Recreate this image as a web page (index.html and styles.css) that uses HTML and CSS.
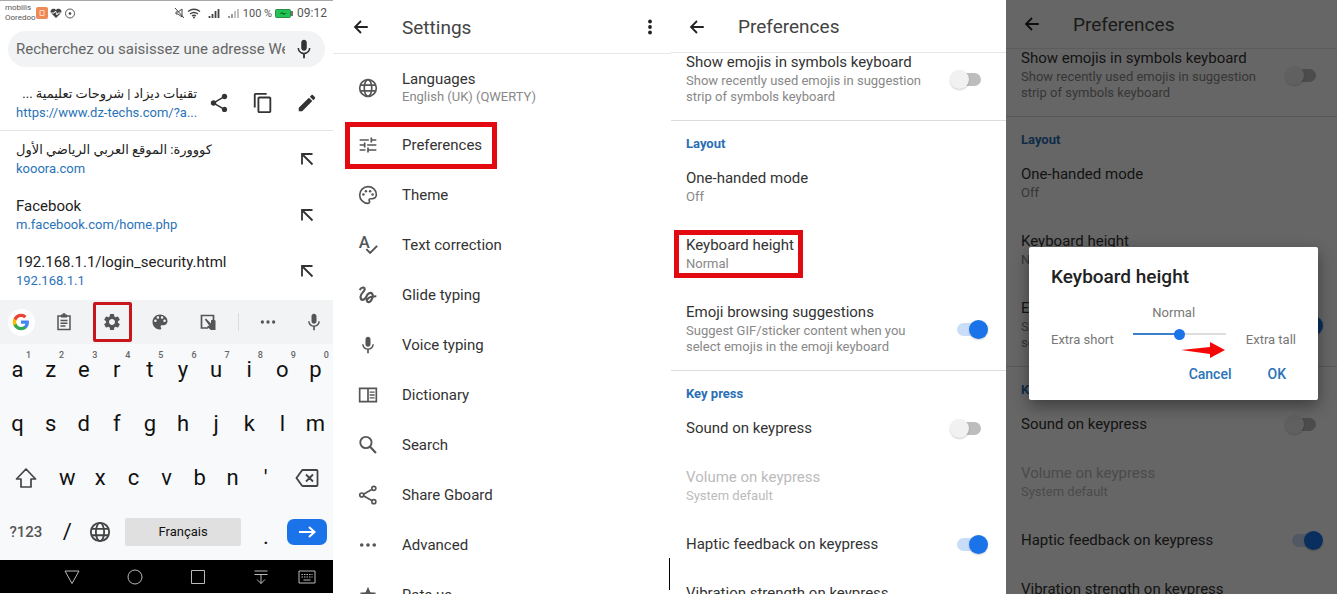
FILE: index.html
```
<!DOCTYPE html>
<html lang="en">
<head>
    <meta charset="UTF-8">
    <meta name="viewport" content="width=device-width, initial-scale=1.0">
    <title>Gboard - Keyboard height</title>
    <link rel="stylesheet" href="styles.css">
</head>
<body>
    <!-- Shared icons -->
    <svg class="sprite" aria-hidden="true">
        <symbol id="back" viewBox="0 0 24 24"><path d="M21 12H4M12 4l-8 8 8 8" fill="none" stroke="currentColor" stroke-width="2.4"/></symbol>
        <symbol id="mic" viewBox="0 0 24 24"><path d="M12 14c1.66 0 3-1.34 3-3V5c0-1.66-1.34-3-3-3S9 3.34 9 5v6c0 1.66 1.34 3 3 3zm5.3-3c0 3-2.54 5.1-5.3 5.1S6.7 14 6.7 11H5c0 3.41 2.72 6.23 6 6.72V22h2v-4.28c3.28-.48 6-3.3 6-6.72h-1.7z"/></symbol>
        <symbol id="insert" viewBox="0 0 14 14"><path d="M2 12.500V2h10.500M2 2l10.500 10.500" fill="none" stroke="currentColor" stroke-width="1.800"/></symbol>
        <symbol id="globe" viewBox="0 0 24 24"><g fill="none" stroke="currentColor" stroke-width="2"><circle cx="12" cy="12" r="10"/><ellipse cx="12" cy="12" rx="4.500" ry="10"/><path d="M3 8.500h18M3 15.500h18"/></g></symbol>
        <symbol id="dots" viewBox="0 0 24 24"><circle cx="4.500" cy="12" r="2.200"/><circle cx="12" cy="12" r="2.200"/><circle cx="19.500" cy="12" r="2.200"/></symbol>
    </svg>

    <main class="screens">

        <!-- Browser with the keyboard open -->
        <section class="screen browser" lang="fr">
            <div class="status">
                <div class="carriers"><span>mobilis</span><span>Ooredoo</span></div>
                <svg class="status-left" viewBox="0 0 40 12" aria-hidden="true">
                    <rect x="0" y="0" width="12" height="12" rx="2" fill="#ee8a56"/>
                    <path d="M4 3.500h4v5h-4z" fill="none" stroke="#fbd9c4"/>
                    <path d="M20 11l-5-5c-2-3 3-6 5-3 2-3 7 0 5 3z" fill="#444"/>
                    <path d="M15 6h3l1.500-2 1.500 4 1-2h3" fill="none" stroke="#fff" stroke-width=".9"/>
                    <circle cx="34" cy="6.500" r="4.500" fill="none" stroke="#555"/><circle cx="34" cy="6.500" r="1.300" fill="#444"/>
                </svg>
                <svg class="status-right" viewBox="0 0 66 12" aria-hidden="true">
                    <path d="M2 5h2l4-3v8L4 7H2zM1 1l9 10" fill="none" stroke="#444"/>
                    <path d="M14 4.500q6-4.500 12 0M16 7q4-3 8 0M18 9q2-1.500 4 0" fill="none" stroke="#444" stroke-width="1.300"/>
                    <circle cx="20" cy="10.500" r="1" fill="#444"/>
                    <path d="M35.500 11V9M38.500 11V7M41.500 11V4M44.500 11V2" stroke="#444" stroke-width="1.800"/>
                    <path d="M55 11V9M58 11V7" stroke="#555" stroke-width="1.200"/><path d="M61 11V4M64 11V2" stroke="#bbb" stroke-width="1.800"/>
                </svg>
                <span class="percent">100 %</span>
                <svg class="battery" viewBox="0 0 18 9" aria-hidden="true">
                    <rect x=".5" y=".5" width="15" height="8" rx="1" fill="#21c352" stroke="#2b8d48"/><path d="M17 2v5" stroke="#444" stroke-width="1.500"/><path d="M4 4.500l4-1.500v1l4 .5-4 1.500v-1z" fill="#126b2d"/>
                </svg>
                <span>09:12</span>
            </div>

            <div class="search">
                <input type="text" aria-label="Recherche" placeholder="Recherchez ou saisissez une adresse Web">
                <button type="button" aria-label="Recherche vocale"><svg class="icon-22"><use href="#mic"/></svg></button>
            </div>

            <ul class="results">
                <li class="current">
                    <a href="#">
                        <span class="title" lang="ar" dir="rtl">تقنيات ديزاد | شروحات تعليمية ...</span>
                        <span class="url">https://www.dz-techs.com/?a...</span>
                    </a>
                    <div class="tools">
                        <button type="button" aria-label="Partager"><svg class="icon-22" viewBox="0 0 24 24"><path d="M18 16.080c-.76 0-1.440.3-1.960.77L8.910 12.700c.05-.23.09-.46.09-.7s-.04-.47-.09-.7l7.050-4.110c.54.5 1.250.81 2.040.81 1.660 0 3-1.340 3-3s-1.340-3-3-3-3 1.340-3 3c0 .24.040.47.090.7L8.040 9.810C7.500 9.310 6.790 9 6 9c-1.660 0-3 1.340-3 3s1.340 3 3 3c.79 0 1.500-.31 2.040-.81l7.120 4.160c-.05.21-.08.43-.08.65 0 1.610 1.310 2.920 2.920 2.920s2.920-1.310 2.920-2.920-1.310-2.920-2.920-2.920z"/></svg></button>
                        <button type="button" aria-label="Copier"><svg class="icon-22" viewBox="0 0 24 24"><path d="M16 1H4c-1.100 0-2 .9-2 2v14h2V3h12V1zm3 4H8c-1.100 0-2 .9-2 2v14c0 1.100.9 2 2 2h11c1.100 0 2-.9 2-2V7c0-1.100-.9-2-2-2zm0 16H8V7h11v14z"/></svg></button>
                        <button type="button" aria-label="Modifier"><svg class="icon-22" viewBox="0 0 24 24"><path d="M3 17.250V21h3.750L17.810 9.940l-3.750-3.750L3 17.250zM20.710 7.040c.39-.39.39-1.020 0-1.410l-2.340-2.340c-.39-.39-1.020-.39-1.410 0l-1.830 1.830 3.750 3.750 1.830-1.830z"/></svg></button>
                    </div>
                </li>
                <li>
                    <a href="#">
                        <span class="title" lang="ar">كووورة: الموقع العربي الرياضي الأول</span>
                        <span class="url">kooora.com</span>
                    </a>
                    <button type="button" aria-label="Insérer"><svg class="icon-14"><use href="#insert"/></svg></button>
                </li>
                <li>
                    <a href="#">
                        <span class="title">Facebook</span>
                        <span class="url">m.facebook.com/home.php</span>
                    </a>
                    <button type="button" aria-label="Insérer"><svg class="icon-14"><use href="#insert"/></svg></button>
                </li>
                <li>
                    <a href="#">
                        <span class="title">192.168.1.1/login_security.html</span>
                        <span class="url">192.168.1.1</span>
                    </a>
                    <button type="button" aria-label="Insérer"><svg class="icon-14"><use href="#insert"/></svg></button>
                </li>
            </ul>

            <div class="toolbar">
                <button type="button" class="google" aria-label="Google"><svg class="icon-18" viewBox="0 0 24 24">
                    <path fill="#4285f4" d="M22.560 12.250c0-.78-.07-1.530-.2-2.250H12v4.260h5.920c-.26 1.370-1.040 2.530-2.210 3.310v2.770h3.570c2.080-1.920 3.280-4.740 3.280-8.090z"/>
                    <path fill="#34a853" d="M12 23c2.970 0 5.460-.98 7.280-2.660l-3.570-2.770c-.98.66-2.230 1.060-3.710 1.060-2.860 0-5.290-1.930-6.160-4.530H2.180v2.840C3.990 20.530 7.700 23 12 23z"/>
                    <path fill="#fbbc05" d="M5.840 14.090c-.22-.66-.35-1.360-.35-2.090s.13-1.430.35-2.090V7.070H2.180C1.430 8.550 1 10.220 1 12s.43 3.450 1.180 4.930l2.850-2.220.81-.62z"/>
                    <path fill="#ea4335" d="M12 5.380c1.620 0 3.060.56 4.210 1.640l3.150-3.150C17.450 2.090 14.970 1 12 1 7.700 1 3.990 3.470 2.180 7.070l3.660 2.840c.87-2.600 3.300-4.530 6.160-4.530z"/>
                </svg></button>
                <button type="button" aria-label="Presse-papiers"><svg class="icon-18" viewBox="0 0 18 18"><path d="M3 3h12v13.500H3zM5.500 7.500h7M5.500 10.200h7M5.500 13h5" fill="none" stroke="currentColor" stroke-width="1.500"/><path d="M6 1.500h1.500a1.500 1.500 0 0 1 3 0H12v3H6z"/></svg></button>
                <button type="button" class="marked" aria-label="Paramètres"><svg class="icon-20" viewBox="0 0 24 24"><path d="M19.140 12.940c.04-.3.060-.61.060-.94 0-.32-.02-.64-.07-.94l2.030-1.580c.18-.14.230-.41.120-.61l-1.920-3.320c-.12-.22-.37-.29-.59-.22l-2.390.96c-.5-.38-1.030-.7-1.620-.94l-.36-2.540c-.04-.24-.24-.41-.48-.41h-3.840c-.24 0-.43.170-.47.410l-.36 2.540c-.59.240-1.130.570-1.620.940l-2.390-.96c-.22-.08-.47 0-.59.220L2.740 8.870c-.12.210-.08.470.120.610l2.030 1.580c-.05.300-.09.630-.09.940s.020.640.070.940l-2.030 1.580c-.18.140-.23.410-.12.610l1.920 3.320c.12.220.370.290.590.220l2.390-.96c.5.380 1.030.700 1.620.940l.36 2.540c.05.240.240.410.480.410h3.840c.24 0 .44-.17.470-.41l.36-2.540c.59-.24 1.130-.56 1.620-.94l2.390.96c.22.080.470 0 .590-.22l1.920-3.320c.12-.22.070-.47-.12-.61l-2.010-1.580zM12 15.600c-1.980 0-3.600-1.620-3.600-3.600s1.620-3.600 3.600-3.600 3.600 1.620 3.600 3.600-1.620 3.600-3.600 3.600z"/></svg></button>
                <button type="button" aria-label="Thème"><svg class="icon-20" viewBox="0 0 24 24"><path d="M12 3c-4.970 0-9 4.030-9 9s4.030 9 9 9c.83 0 1.500-.67 1.500-1.500 0-.39-.15-.74-.39-1.010-.23-.26-.38-.61-.38-.99 0-.83.670-1.500 1.500-1.500H16c2.760 0 5-2.240 5-5 0-4.420-4.030-8-9-8zm-5.500 9c-.83 0-1.500-.67-1.500-1.500S5.670 9 6.500 9 8 9.670 8 10.500 7.330 12 6.500 12zm3-4C8.670 8 8 7.330 8 6.500S8.670 5 9.500 5s1.500.67 1.500 1.500S10.330 8 9.500 8zm5 0c-.83 0-1.500-.67-1.500-1.500S13.670 5 14.500 5s1.500.67 1.500 1.500S15.330 8 14.500 8zm3 4c-.83 0-1.500-.67-1.500-1.500S16.670 9 17.500 9s1.500.67 1.500 1.500-.67 1.500-1.500 1.500z"/></svg></button>
                <button type="button" aria-label="Une main"><svg class="icon-18" viewBox="0 0 18 18"><path d="M9 15H2.500V2.500h12V8" fill="none" stroke="currentColor" stroke-width="1.700"/><path d="M5.800 6.500L7 5.500l5 5V7.200q2-.8 4.500.3V17h-4.500L8 14l1-1.200 1.500.2z"/></svg></button>
                <span class="rule"></span>
                <button type="button" aria-label="Plus"><svg class="icon-18"><use href="#dots"/></svg></button>
                <button type="button" aria-label="Saisie vocale"><svg class="icon-20"><use href="#mic"/></svg></button>
            </div>

            <div class="keys">
                <button type="button">a<sup>1</sup></button>
                <button type="button">z<sup>2</sup></button>
                <button type="button">e<sup>3</sup></button>
                <button type="button">r<sup>4</sup></button>
                <button type="button">t<sup>5</sup></button>
                <button type="button">y<sup>6</sup></button>
                <button type="button">u<sup>7</sup></button>
                <button type="button">i<sup>8</sup></button>
                <button type="button">o<sup>9</sup></button>
                <button type="button">p<sup>0</sup></button>
                <button type="button">q</button>
                <button type="button">s</button>
                <button type="button">d</button>
                <button type="button">f</button>
                <button type="button">g</button>
                <button type="button">h</button>
                <button type="button">j</button>
                <button type="button">k</button>
                <button type="button">l</button>
                <button type="button">m</button>
                <button type="button" class="wide" aria-label="Majuscule"><svg class="icon-22" viewBox="0 0 22 22"><path d="M11 2L1.500 12H6v8h10v-8h4.500z" fill="none" stroke="currentColor" stroke-width="1.700" stroke-linejoin="round"/></svg></button>
                <button type="button">w</button>
                <button type="button">x</button>
                <button type="button">c</button>
                <button type="button">v</button>
                <button type="button">b</button>
                <button type="button">n</button>
                <button type="button">'</button>
                <button type="button" class="wide" aria-label="Effacer"><svg class="icon-24" viewBox="0 0 24 24"><path d="M8 4h13.500q1 0 1 1v14q0 1-1 1H8q-1 0-1.500-1L1.500 12l5-7Q7 4 8 4zM11 8.500l7 7M18 8.500l-7 7" fill="none" stroke="currentColor" stroke-width="1.800"/></svg></button>
                <button type="button" class="wide mode">?123</button>
                <button type="button">/</button>
                <button type="button" aria-label="Langue"><svg class="icon-22"><use href="#globe"/></svg></button>
                <button type="button" class="space"><span>Français</span></button>
                <button type="button" class="dot">.</button>
                <button type="button" class="wide enter" aria-label="Entrée"><span><svg class="icon-18" viewBox="0 0 18 18"><path d="M1 9h15M11 4l5.500 5L11 14" fill="none" stroke="currentColor" stroke-width="2"/></svg></span></button>
            </div>

            <div class="navbar">
                <button type="button" aria-label="Retour"><svg class="icon-16" viewBox="0 0 16 16"><path d="M1 2h14L8 14.500z"/></svg></button>
                <button type="button" aria-label="Accueil"><svg class="icon-16" viewBox="0 0 16 16"><circle cx="8" cy="8" r="7"/></svg></button>
                <button type="button" aria-label="Récents"><svg class="icon-16" viewBox="0 0 16 16"><path d="M1.500 1.500h13v13h-13z"/></svg></button>
                <button type="button" aria-label="Notifications"><svg class="icon-16" viewBox="0 0 16 16"><path d="M1.500 2h13M1.500 5.500h13M8 6v8.500M4 10.500l4 4 4-4"/></svg></button>
                <button type="button" aria-label="Clavier"><svg class="icon-18" viewBox="0 0 18 14"><path d="M1 1h16v12H1z"/><path d="M3.500 4.500h11M3.500 7h11" stroke-dasharray="1.500 1"/><path d="M5.500 10h7"/></svg></button>
            </div>
        </section>

        <!-- Settings list -->
        <section class="screen settings">
            <header class="bar">
                <button type="button" aria-label="Back"><svg class="icon-18"><use href="#back"/></svg></button>
                <h1>Settings</h1>
                <button type="button" class="more" aria-label="More"><svg class="icon-18" viewBox="0 0 18 18"><circle cx="9" cy="3.500" r="1.900"/><circle cx="9" cy="9" r="1.900"/><circle cx="9" cy="14.500" r="1.900"/></svg></button>
            </header>
            <nav class="menu">
                <a href="#" class="tall"><svg class="icon-20"><use href="#globe"/></svg><span>Languages<small>English (UK) (QWERTY)</small></span></a>
                <a href="#" class="marked"><svg class="icon-20" viewBox="0 0 24 24"><path d="M2 17v2h7v-2H2zM2 5v2h11V5H2zm11 16v-2h9v-2h-9v-2h-2v6h2zM7 9v2H2v2h5v2h2V9H7zm15 4v-2H11v2h11zm-7-4h2V7h5V5h-5V3h-2v6z"/></svg>Preferences</a>
                <a href="#"><svg class="icon-20" viewBox="0 0 24 24"><path d="M12 2C6.500 2 2 6.500 2 12s4.500 10 10 10c1.200 0 2-.8 2-1.800 0-.6-.4-1-.6-1.400-.5-1 .2-2.300 1.600-2.300h2c2.800 0 5-2.200 5-5C22 5.800 17.500 2 12 2z" fill="none" stroke="currentColor" stroke-width="2"/><circle cx="6.500" cy="11.500" r="1.500"/><circle cx="9.500" cy="7.500" r="1.500"/><circle cx="14.500" cy="7.500" r="1.500"/><circle cx="17.500" cy="11.500" r="1.500"/></svg>Theme</a>
                <a href="#"><svg class="icon-20" viewBox="0 0 24 24"><text x="1" y="16" font-size="20" font-weight="500">A</text><path d="M10 17l4.500 4.500L23 13" fill="none" stroke="currentColor" stroke-width="2.400"/></svg>Text correction</a>
                <a href="#"><svg class="icon-20" viewBox="0 0 24 24"><path d="M2 6c2-3.500 6-4 6-1 0 3-5 5-5 9 0 5 5 5 7 0 1.500-4 5-6 7-3.500 2 3-1 10-4.500 10-4-.5-2-7 9.500-7" fill="none" stroke="currentColor" stroke-width="2.600"/></svg>Glide typing</a>
                <a href="#"><svg class="icon-20"><use href="#mic"/></svg>Voice typing</a>
                <a href="#"><svg class="icon-20" viewBox="0 0 24 24"><path d="M2 4h20v16H2zM12 4v16" fill="none" stroke="currentColor" stroke-width="2"/><path d="M14 8.500h6M14 12h6M14 15.500h6" stroke="currentColor" stroke-width="1.600"/></svg>Dictionary</a>
                <a href="#"><svg class="icon-20" viewBox="0 0 24 24"><circle cx="9.500" cy="9" r="6.800" fill="none" stroke="currentColor" stroke-width="2.200"/><path d="M14.500 14l7 7.500" stroke="currentColor" stroke-width="2.600"/></svg>Search</a>
                <a href="#"><svg class="icon-20" viewBox="0 0 24 24"><g fill="none" stroke="currentColor" stroke-width="2"><circle cx="4.500" cy="12" r="2.400"/><circle cx="19" cy="4" r="2.400"/><circle cx="19" cy="20" r="2.400"/><path d="M6.500 11l10.500-6M6.500 13l10.500 6"/></g></svg>Share Gboard</a>
                <a href="#"><svg class="icon-20"><use href="#dots"/></svg>Advanced</a>
                <a href="#"><svg class="icon-20" viewBox="0 0 24 24"><path d="M12 17.300L18.200 21l-1.600-7L22 9.200l-7.200-.6L12 2 9.200 8.600 2 9.200 7.500 14l-1.700 7z"/></svg>Rate us</a>
            </nav>
        </section>

        <!-- Preferences -->
        <section class="screen prefs">
            <header class="bar">
                <button type="button" aria-label="Back"><svg class="icon-18"><use href="#back"/></svg></button>
                <h1>Preferences</h1>
            </header>
            <div class="group">
                <label class="pref first"><span>Show emojis in symbols keyboard<small>Show recently used emojis in suggestion strip of symbols keyboard</small></span><input type="checkbox"></label>
            </div>
            <div class="group">
                <h2>Layout</h2>
                <div class="pref"><span>One-handed mode<small>Off</small></span></div>
                <div class="pref"><span class="marked">Keyboard height<small>Normal</small></span></div>
                <label class="pref"><span>Emoji browsing suggestions<small>Suggest GIF/sticker content when you select emojis in the emoji keyboard</small></span><input type="checkbox" checked></label>
            </div>
            <div class="group">
                <h2>Key press</h2>
                <label class="pref"><span>Sound on keypress</span><input type="checkbox"></label>
                <div class="pref disabled"><span>Volume on keypress<small>System default</small></span></div>
                <label class="pref"><span>Haptic feedback on keypress</span><input type="checkbox" checked></label>
                <div class="pref"><span>Vibration strength on keypress</span></div>
            </div>
        </section>

        <!-- Preferences behind the height dialog -->
        <section class="screen prefs dimmed">
            <header class="bar">
                <button type="button" aria-label="Back"><svg class="icon-18"><use href="#back"/></svg></button>
                <h1>Preferences</h1>
            </header>
            <div class="group">
                <label class="pref first"><span>Show emojis in symbols keyboard<small>Show recently used emojis in suggestion strip of symbols keyboard</small></span><input type="checkbox"></label>
            </div>
            <div class="group">
                <h2>Layout</h2>
                <div class="pref"><span>One-handed mode<small>Off</small></span></div>
                <div class="pref"><span>Keyboard height<small>Normal</small></span></div>
                <label class="pref"><span>Emoji browsing suggestions<small>Suggest GIF/sticker content when you select emojis in the emoji keyboard</small></span><input type="checkbox" checked></label>
            </div>
            <div class="group">
                <h2>Key press</h2>
                <label class="pref"><span>Sound on keypress</span><input type="checkbox"></label>
                <div class="pref disabled"><span>Volume on keypress<small>System default</small></span></div>
                <label class="pref"><span>Haptic feedback on keypress</span><input type="checkbox" checked></label>
                <div class="pref"><span>Vibration strength on keypress</span></div>
            </div>

            <div class="overlay">
                <div class="dialog" role="dialog" aria-labelledby="dialog-title">
                    <h2 id="dialog-title">Keyboard height</h2>
                    <div class="height">
                        <span class="end">Extra short</span>
                        <div class="slider">
                            <label for="height">Normal</label>
                            <input type="range" id="height" min="0" max="4" value="2">
                            <svg class="arrow" viewBox="0 0 44 16" aria-hidden="true"><path d="M0 8l29-3V0l15 8-15 8v-4z" fill="#f60606"/></svg>
                        </div>
                        <span class="end">Extra tall</span>
                    </div>
                    <div class="actions">
                        <button type="button">Cancel</button>
                        <button type="button">OK</button>
                    </div>
                </div>
            </div>
        </section>
    </main>
</body>
</html>
```
FILE: styles.css
```
* { box-sizing: border-box; }
body { margin: 0; background: #fff; font-family: Roboto, "Noto Sans", "DejaVu Sans", sans-serif; color: #333; }
button { background: none; border: none; padding: 0; margin: 0; font: inherit; color: inherit; cursor: pointer; display: flex; align-items: center; justify-content: center; }
a { color: inherit; text-decoration: none; }
h1, h2, ul { margin: 0; padding: 0; font-weight: 400; }
svg { fill: currentColor; display: block; flex-shrink: 0; overflow: visible; }
small { display: block; }

.sprite { position: absolute; width: 0; height: 0; overflow: hidden; }
.icon-14 { width: 14px; height: 14px; }
.icon-16 { width: 16px; height: 16px; }
.icon-18 { width: 18px; height: 18px; }
.icon-20 { width: 20px; height: 20px; }
.icon-22 { width: 22px; height: 22px; }
.icon-24 { width: 24px; height: 24px; }

.screens { display: grid; grid-template-columns: 333fr 338fr 335fr 331fr; height: 100vh; overflow: hidden; }
.screen { position: relative; min-width: 0; overflow: hidden; }

/* Browser */
.browser { display: flex; flex-direction: column; padding-bottom: 1px; }
.status { display: flex; align-items: center; height: 25px; padding: 0 6px 0 5px; font-size: 12px; color: #555; border-top: 1px solid #aaa; }
.carriers { display: flex; flex-direction: column; font-size: 8px; line-height: 10px; }
.status-left { width: 40px; height: 12px; }
.status-right { width: 66px; height: 12px; margin-left: auto; }
.percent { margin-left: 3px; font-size: 11px; }
.battery { width: 18px; height: 9px; margin: 0 4px 0 3px; }

.search { display: flex; align-items: center; justify-content: space-between; height: 36px; margin: 6px 8px 8px; padding: 0 10px 0 8px; border-radius: 18px; background: #f1f3f4; }
.search input { flex: 1; min-width: 0; margin-right: 8px; padding: 0; border: none; background: none; font: inherit; font-size: 15px; color: #666; outline: none; }
.search input::placeholder { color: #666; }

.results { list-style: none; }
.results li { display: flex; align-items: center; justify-content: space-between; height: 56px; padding: 0 19px 0 16px; color: #333; }
.results .current { padding-right: 15px; border-bottom: 1px solid #e4e4e4; }
.results a { display: flex; flex-direction: column; }
.tools { display: flex; gap: 22px; }
.title { font-size: 15px; line-height: 20px; color: #222; white-space: nowrap; }
.title:lang(ar) { font-size: 13px; }
.url { font-size: 13px; line-height: 18px; color: #2a73b8; }

.toolbar { display: grid; grid-template-columns: 42fr 44fr 52fr 44fr 52fr 8fr 52fr 39fr; align-items: center; justify-items: center; height: 44px; margin-top: auto; background: #f1f3f4; color: #555; }
.toolbar .google { width: 27px; height: 27px; border-radius: 50%; background: #fff; }
.toolbar .marked { width: 39px; height: 40px; border: 3px solid #c9161c; border-radius: 2px; }
.rule { width: 1px; height: 18px; background: #dadce0; }

.keys { display: grid; grid-template-columns: repeat(20, 1fr); grid-auto-rows: 54px; padding: 0 1px; background: #f8f9fb; color: #111; font-size: 22px; }
.keys button { position: relative; grid-column: span 2; padding-bottom: 3px; }
.keys sup { position: absolute; top: 4px; right: 3px; font-size: 9px; line-height: 14px; font-weight: 500; color: #666; }
.keys svg { color: #444; }
.keys .wide { grid-column: span 3; }
.keys .mode { font-size: 15px; font-weight: 500; color: #555; }
.keys .space { grid-column: span 8; padding: 0 8px 3px; }
.space span { flex: 1; font-size: 13px; line-height: 28px; background: #e0e0e0; border-radius: 2px; }
.keys .dot { align-items: flex-end; padding-bottom: 12px; line-height: 22px; }
.enter span { display: flex; padding: 4px 11px; border-radius: 7px; background: #1a73e8; }
.keys .enter svg { color: #fff; }

.navbar { display: grid; grid-template-columns: 40fr 63fr 63fr 63fr 63fr 30fr 11fr; align-items: center; height: 33px; background: #000; }
.navbar button:first-child { grid-column: 2; }
.navbar svg { fill: none; stroke: #bbb; stroke-width: 1; }

/* App bar */
.bar { display: flex; align-items: center; height: 54px; padding: 1px 12px 0 19px; border-bottom: 1px solid #e6e6e6; color: #222; }
.bar h1 { margin-left: 32px; font-size: 19px; color: #444; }
.more { margin-left: auto; }

/* Settings */
.settings::after { content: ""; position: absolute; right: 1px; bottom: 4px; width: 1px; height: 32px; background: #000; }
.menu { display: flex; flex-direction: column; align-items: flex-start; }
.menu a { position: relative; display: flex; align-items: center; gap: 24px; height: 50px; margin-left: 25px; font-size: 15px; }
.menu .tall { height: 66px; padding-top: 2px; }
.menu svg { color: #555; }
.menu small { font-size: 13px; line-height: 18px; color: #888; }
.menu .marked::after { content: ""; position: absolute; inset: 2px -15px 1px -13px; border: 5px solid #e20a10; }

/* Preferences */
.prefs .bar { height: 53px; padding-left: 17px; }
.group + .group { border-top: 1px solid #dcdcdc; }
.group h2 { padding: 14px 15px 0; font-size: 13px; line-height: 18px; font-weight: 700; color: #2a6fb5; }
.pref { display: flex; align-items: center; justify-content: space-between; gap: 12px; padding: 16px 25px 15px 15px; font-size: 15px; line-height: 18px; }
.pref.first { padding-top: 0; }
.pref small { margin-top: 2px; font-size: 13px; line-height: 16px; color: #888; }
.pref span { max-width: 244px; }
.pref .marked { position: relative; }
.pref .marked::after { content: ""; position: absolute; inset: -6px -9px -6px -12px; border: 5px solid #e20a10; }
.disabled, .disabled small { color: #bbb; }
.pref input { position: relative; appearance: none; width: 24px; height: 13px; margin: 0; border-radius: 7px; background: #bdbdbd; }
.pref input::before { content: ""; position: absolute; top: -3px; left: -7px; width: 19px; height: 19px; border-radius: 50%; background: #f1f1f1; box-shadow: 0 1px 2px rgba(0, 0, 0, 0.2); }
.pref input:checked { background: #c9dcf8; }
.pref input:checked::before { left: 12px; background: #1a73e8; }

/* Dialog */
.dimmed .bar { height: 49px; padding-top: 0; }
.dimmed .pref { padding-right: 21px; }
.overlay { position: absolute; inset: 0; display: flex; align-items: center; padding: 53px 19px 0 23px; background: rgba(0, 0, 0, 0.6); }
.dialog { flex: 1; padding: 19px 22px 17px; background: #fff; border-radius: 2px; box-shadow: 0 6px 16px rgba(0, 0, 0, 0.4); }
.dialog h2 { padding: 0; font-size: 19px; line-height: 22px; font-weight: 500; color: #222; }
.height { display: flex; align-items: flex-start; justify-content: space-between; margin-top: 17px; font-size: 13px; line-height: 16px; color: #777; }
.height .end { padding-top: 27px; }
.slider { position: relative; width: 93px; }
.slider label { display: block; padding-left: 19px; }
.slider input { display: block; appearance: none; width: 100%; height: 2px; margin: 12px 0 0; background: linear-gradient(to right, #3b7fd0 50%, #ddd 50%); }
.slider input::-webkit-slider-thumb { appearance: none; width: 11px; height: 11px; border-radius: 50%; background: #1a73e8; }
.arrow { position: absolute; right: 1px; top: 37px; width: 44px; height: 16px; }
.actions { display: flex; justify-content: flex-end; gap: 36px; margin-top: 17px; padding-right: 10px; font-size: 14px; line-height: 18px; font-weight: 500; color: #2a73b8; }
```
